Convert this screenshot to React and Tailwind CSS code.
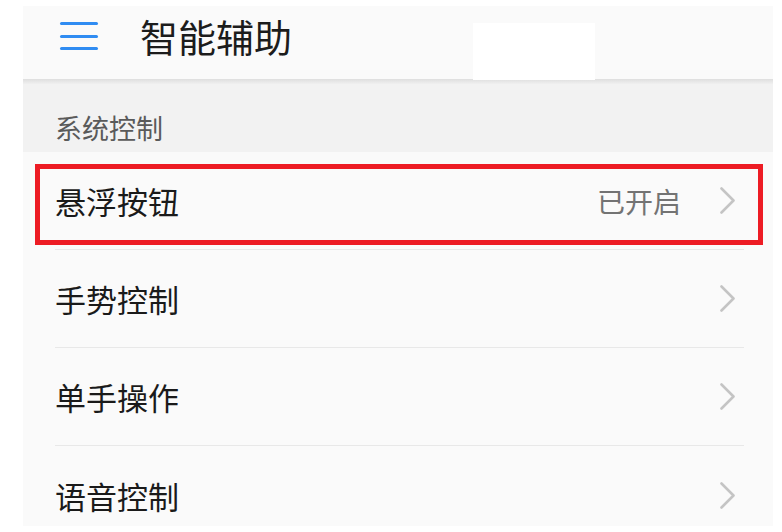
import React from "react";

const font = { fontFamily: '"Noto Sans CJK SC", "Noto Sans", sans-serif' };

function Chevron() {
  return (
    <svg width="17" height="27" viewBox="0 0 17 27" className="shrink-0">
      <path d="M2.5 1.5 L14.5 13.5 L2.5 25.5" fill="none" stroke="#c4c4c4" strokeWidth="2.6" strokeLinecap="round" strokeLinejoin="round" />
    </svg>
  );
}

function Row({ label, value, last }) {
  return (
    <div className={"ml-[32px] mr-[29px] flex h-[98px] shrink-0 items-center " + (last ? "" : "border-b border-[#e8e8e8]")}>
      <span className="flex-1 text-[31px] leading-none text-[#1a1a1a]">{label}</span>
      {value && <span className="mr-[38px] text-[28px] leading-none text-[#737373]">{value}</span>}
      <div className="mr-[8px] flex items-center">
        <Chevron />
      </div>
    </div>
  );
}

export default function App() {
  return (
    <div className="relative h-[532px] w-[782px] overflow-hidden bg-white" style={font}>
      <div className="ml-[23px] mt-[6px] flex h-[520px] w-[750px] flex-col overflow-hidden bg-[#fafafa]">
        <div className="flex h-[73px] shrink-0 items-start pt-[11px]">
          <div className="ml-[37px] mt-[5px] flex w-[38px] flex-col gap-[9.5px]">
            <div className="h-[3px] rounded-full bg-[#2f8cf2]" />
            <div className="h-[3px] rounded-full bg-[#2f8cf2]" />
            <div className="h-[3px] rounded-full bg-[#2f8cf2]" />
          </div>
          <span className="ml-[42px] text-[38px] leading-none text-[#1c1c1c]">智能辅助</span>
        </div>
        <div className="h-[5px] shrink-0 bg-gradient-to-b from-[#dedede] to-[#f0f0f0]" />
        <div className="flex h-[68px] shrink-0 items-center bg-[#f2f2f2] pl-[32px] pt-[18px]">
          <span className="text-[27px] leading-none text-[#5a5a5a]">系统控制</span>
        </div>
        <div className="flex flex-col">
          <Row label="悬浮按钮" value="已开启" />
          <Row label="手势控制" />
          <Row label="单手操作" />
          <Row label="语音控制" last />
        </div>
      </div>
      <div className="absolute left-[473px] top-[23px] h-[57px] w-[122px] bg-white" />
      <div className="absolute left-[35px] top-[164px] h-[81px] w-[728px] border-[5px] border-[#ed1c24]" />
    </div>
  );
}
